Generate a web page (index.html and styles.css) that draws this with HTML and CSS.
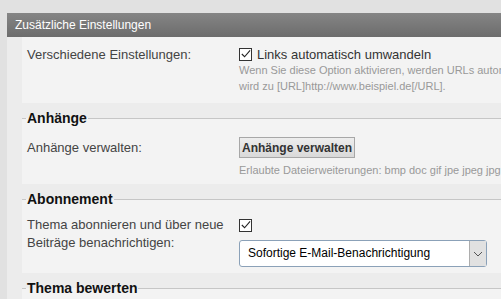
FILE: index.html
```html
<!DOCTYPE html>
<html lang="de">
<head>
    <meta charset="UTF-8">
    <title>Zusätzliche Einstellungen</title>
    <link rel="stylesheet" href="styles.css">
</head>
<body>
    <div class="page">
      <section class="panel">
        <h2 class="panel-title">Zusätzliche Einstellungen</h2>
        <div class="panel-body">

            <div class="group">
                <div class="row">
                    <div class="label">Verschiedene Einstellungen:</div>
                    <div class="field">
                        <div class="check-line">
                            <span class="check"><svg width="12" height="12" viewBox="0 0 12 12"><path d="M2 6 L5 9 L11 2" fill="none" stroke="#222" stroke-width="1.2"/></svg></span>
                            Links automatisch umwandeln
                        </div>
                        <div class="hint">Wenn Sie diese Option aktivieren, werden URLs automatisch in Links umgewandelt: www.beispiel.de<br>wird zu [URL]http://www.beispiel.de[/URL].</div>
                    </div>
                </div>
            </div>

            <fieldset class="group">
                <legend>Anhänge</legend>
                <div class="row row-short">
                    <div class="label label-btn">Anhänge verwalten:</div>
                    <div class="field">
                        <button type="button" class="btn">Anhänge verwalten</button>
                        <div class="hint hint-btn">Erlaubte Dateierweiterungen: bmp doc gif jpe jpeg jpg pdf png txt zip</div>
                    </div>
                </div>
            </fieldset>

            <fieldset class="group">
                <legend>Abonnement</legend>
                <div class="row row-short">
                    <div class="label label-tall">Thema abonnieren und über neue Beiträge benachrichtigen:</div>
                    <div class="field">
                        <div class="check-line">
                            <span class="check"><svg width="12" height="12" viewBox="0 0 12 12"><path d="M2 6 L5 9 L11 2" fill="none" stroke="#222" stroke-width="1.2"/></svg></span>
                        </div>
                        <div class="select">
                            <span class="select-text">Sofortige E-Mail-Benachrichtigung</span>
                            <span class="select-arrow"><svg width="10" height="6" viewBox="0 0 10 6"><path d="M1 1 L5 5 L9 1" fill="none" stroke="#555" stroke-width="1"/></svg></span>
                        </div>
                    </div>
                </div>
            </fieldset>

            <fieldset class="group">
                <legend>Thema bewerten</legend>
                <div class="row">
                    <div class="label">Bewertung:</div>
                </div>
            </fieldset>

        </div>
      </section>
    </div>
</body>
</html>
```

FILE: styles.css
```css
* {
    box-sizing: border-box;
}

body {
    margin: 0;
    background-color: #e1e1e1;
    font-family: "Liberation Sans", Arial, sans-serif;
    font-size: 13px;
    color: #444;
    overflow: hidden;
}

.page {
    padding: 13px 0 0 7px;
}

.panel {
    width: 560px;
    background-color: #ececec;
}

.panel-title {
    margin: 0;
    height: 24px;
    line-height: 24px;
    padding-left: 8px;
    font-size: 12px;
    font-weight: normal;
    color: #ffffff;
    background: linear-gradient(#858585, #6c6c6c);
}

.panel-body {
    padding-left: 15px;
}

.group {
    background-color: #f3f3f3;
    margin: 0 0 8px;
    padding: 0;
    border: none;
    min-width: 0;
}

fieldset.group {
    border-top: 1px solid #c6c6c6;
}

legend {
    margin-left: 4px;
    padding: 0 1px;
    font-size: 14px;
    font-weight: bold;
    color: #111;
    line-height: 14px;
}

.row {
    display: grid;
    grid-template-columns: 212px 1fr;
    padding: 10px 0 9px 5px;
}

fieldset .row {
    padding-top: 12px;
    padding-bottom: 11px;
}

fieldset .row-short {
    padding-bottom: 6px;
}

.label {
    line-height: 16px;
}

.label-btn {
    padding-top: 3px;
}

.label-tall {
    line-height: 18px;
    margin-top: -2px;
}

.check-line {
    display: flex;
    align-items: center;
    gap: 5px;
    height: 14px;
    color: #333;
}

.check {
    width: 13px;
    height: 13px;
    border: 1px solid #333;
    background-color: #fff;
    display: flex;
    align-items: center;
    justify-content: center;
}

.hint {
    font-size: 11px;
    color: #999;
    line-height: 16px;
    margin-top: 1px;
    white-space: nowrap;
}

.hint-btn {
    margin-top: 4px;
}

.btn {
    display: block;
    width: 116px;
    height: 21px;
    padding: 0;
    border: 1px solid #a7a7a7;
    background: linear-gradient(#ededed, #d9d9d9);
    font-family: inherit;
    font-size: 12px;
    font-weight: bold;
    color: #333;
    white-space: nowrap;
}

.select {
    margin-top: 8px;
    width: 248px;
    height: 27px;
    display: flex;
    border: 1px solid #8ba1b8;
    border-radius: 3px;
    background-color: #fff;
}

.select-text {
    flex: 1;
    line-height: 25px;
    padding-left: 8px;
    font-size: 12px;
    color: #000;
}

.select-arrow {
    width: 17px;
    background-color: #e1e1e1;
    border-left: 1px solid #adadad;
    display: flex;
    align-items: center;
    justify-content: center;
}
```
